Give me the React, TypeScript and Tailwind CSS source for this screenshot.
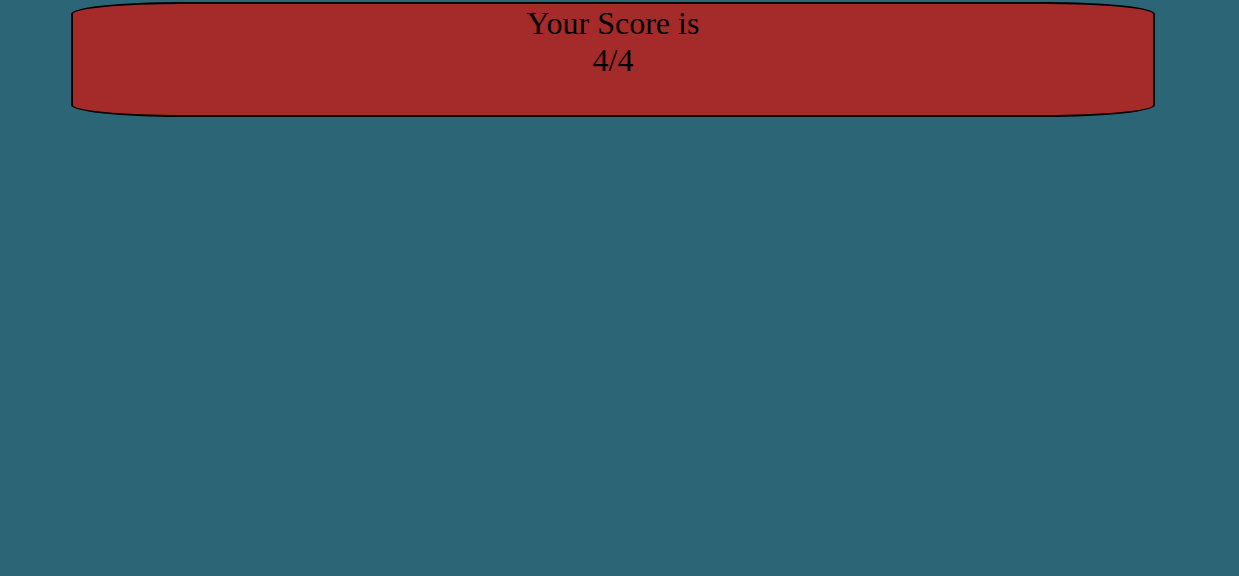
import React from 'react';

const App: React.FC = () => {
  return (
    <div className="min-h-screen w-full bg-[#2c6676] pt-[2px] font-['Liberation_Serif',serif]">
      <div className="ml-[71px] w-[1084px] h-[115px] pt-[1px] bg-[#a52a2a] border-2 border-black rounded-[110px_/_12px] text-center text-[32px] leading-[normal] text-black">
        Your Score is
        <br />
        4/4
      </div>
    </div>
  );
};

export default App;
